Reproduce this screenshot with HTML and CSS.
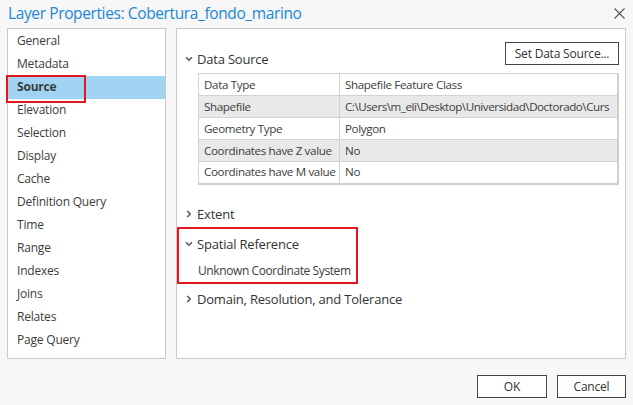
FILE: index.html
```html
<!DOCTYPE html>
<html>
<head>
<meta charset="utf-8">
<link rel="stylesheet" href="styles.css">
</head>
<body>
<div class="dialog">
  <div class="titlebar">
    <span class="title">Layer Properties: Cobertura_fondo_marino</span>
    <svg class="close" width="11" height="11" viewBox="0 0 11 11"><path d="M0.5 0.5L10.5 10.5M10.5 0.5L0.5 10.5" stroke="#555" stroke-width="1.1" fill="none"/></svg>
  </div>
  <div class="main">
    <ul class="nav">
      <li>General</li>
      <li>Metadata</li>
      <li class="active"><span class="mark">Source</span></li>
      <li>Elevation</li>
      <li>Selection</li>
      <li>Display</li>
      <li>Cache</li>
      <li>Definition Query</li>
      <li>Time</li>
      <li>Range</li>
      <li>Indexes</li>
      <li>Joins</li>
      <li>Relates</li>
      <li>Page Query</li>
    </ul>
    <div class="content">
      <div class="ds-head">
        <div class="sec-title"><svg class="chev" width="8" height="6" viewBox="0 0 8 6"><path d="M1 1.2L4 4.2L7 1.2" stroke="#555" stroke-width="1.5" fill="none"/></svg>Data Source</div>
        <button class="btn setds">Set Data Source...</button>
      </div>
      <table class="props">
        <tr><td class="k">Data Type</td><td>Shapefile Feature Class</td></tr>
        <tr class="alt"><td class="k">Shapefile</td><td class="path">C:\Users\m_eli\Desktop\Universidad\Doctorado\Curs</td></tr>
        <tr><td class="k">Geometry Type</td><td>Polygon</td></tr>
        <tr class="alt"><td class="k">Coordinates have Z value</td><td>No</td></tr>
        <tr><td class="k">Coordinates have M value</td><td>No</td></tr>
      </table>
      <div class="sec extent"><svg class="chev" width="8" height="8" viewBox="0 0 8 8"><path d="M2.2 1L5.2 4L2.2 7" stroke="#555" stroke-width="1.5" fill="none"/></svg>Extent</div>
      <div class="spatial">
        <div class="sec"><svg class="chev" width="8" height="6" viewBox="0 0 8 6"><path d="M1 1.2L4 4.2L7 1.2" stroke="#555" stroke-width="1.5" fill="none"/></svg>Spatial Reference</div>
        <div class="sr-val">Unknown Coordinate System</div>
      </div>
      <div class="sec domain"><svg class="chev" width="8" height="8" viewBox="0 0 8 8"><path d="M2.2 1L5.2 4L2.2 7" stroke="#555" stroke-width="1.5" fill="none"/></svg>Domain, Resolution, and Tolerance</div>
    </div>
  </div>
  <div class="footer">
    <button class="btn ok">OK</button>
    <button class="btn cancel">Cancel</button>
  </div>
</div>
</body>
</html>
```

FILE: styles.css
```css
* { box-sizing: border-box; }
html, body { margin: 0; padding: 0; }
body {
  width: 633px;
  height: 405px;
  background: #f6f7f6;
  font-family: "Open Sans", "Noto Sans", sans-serif;
  color: #3c3c3c;
  font-size: 12px;
  overflow: hidden;
}
.dialog { display: flex; flex-direction: column; height: 405px; }
.titlebar {
  height: 28px;
  display: flex;
  align-items: center;
  justify-content: space-between;
  padding: 0 8px 2px 8px;
}
.title { color: #2187d5; font-size: 15.5px; letter-spacing: -0.38px; }
.close { margin-right: 0; margin-top: 1px; }
.main {
  display: flex;
  gap: 10px;
  padding: 0 7px 0 7px;
  height: 331px;
}
.nav {
  list-style: none;
  margin: 0;
  padding: 1px 0 0 0;
  width: 160px;
  background: #fff;
  border: 1px solid #c9c9c9;
}
.nav li {
  height: 23px;
  line-height: 22px;
  padding-left: 9px;
  letter-spacing: -0.2px;
  position: relative;
}
.nav li.active { background: #a1d4f2; font-weight: 700; }
.nav li.active::after {
  content: "";
  position: absolute;
  left: -2px;
  top: -1px;
  width: 76px;
  height: 24px;
  border: 2px solid #e2161f;
}
.content {
  flex: 1;
  background: #fff;
  border: 1px solid #c9c9c9;
  padding: 12px 6px 0 8px;
}
.ds-head {
  display: flex;
  justify-content: space-between;
  align-items: flex-end;
  height: 24px;
}
.sec-title, .sec {
  display: flex;
  align-items: center;
  font-size: 13px;
  letter-spacing: -0.2px;
  color: #333;
}
.sec-title { margin-bottom: -3px; }
.chev { margin-right: 4px; flex: none; }
.btn {
  font-family: "Open Sans", "Noto Sans", sans-serif;
  font-size: 12px;
  letter-spacing: -0.2px;
  color: #333;
  background: #fff;
  border: 1px solid #444;
  height: 23px;
  padding: 0;
  border-radius: 0;
}
.setds { width: 114px; }
.props {
  margin: 8px 0 0 13px;
  border-collapse: collapse;
  width: 421px;
  table-layout: fixed;
  border: 2px solid #cfcfcf;
  border-top-width: 1px;
  border-left-width: 1px;
}
.props td {
  height: 22px;
  border: 1px solid #d2d2d2;
  padding: 0 4px 0 5px;
  white-space: nowrap;
  overflow: hidden;
  font-size: 11.6px;
  letter-spacing: -0.35px;
  line-height: 20px;
}
.props td.k { width: 141px; }
.props td.path { letter-spacing: -0.45px; }
.props tr.alt td { background: #e9e9e9; }
.extent { margin-top: 20px; height: 18px; }
.spatial {
  margin: 4px 0 0 -8px;
  width: 181px;
  height: 57px;
  border: 2px solid #e2161f;
  padding: 6px 0 0 6px;
}
.sr-val { padding-left: 13px; margin-top: 9px; letter-spacing: -0.4px; }
.domain { margin-top: 6px; height: 18px; }
.footer {
  display: flex;
  justify-content: flex-end;
  gap: 10px;
  padding: 16px 7px 0 0;
}
.ok { width: 70px; }
.cancel { width: 69px; }
```
